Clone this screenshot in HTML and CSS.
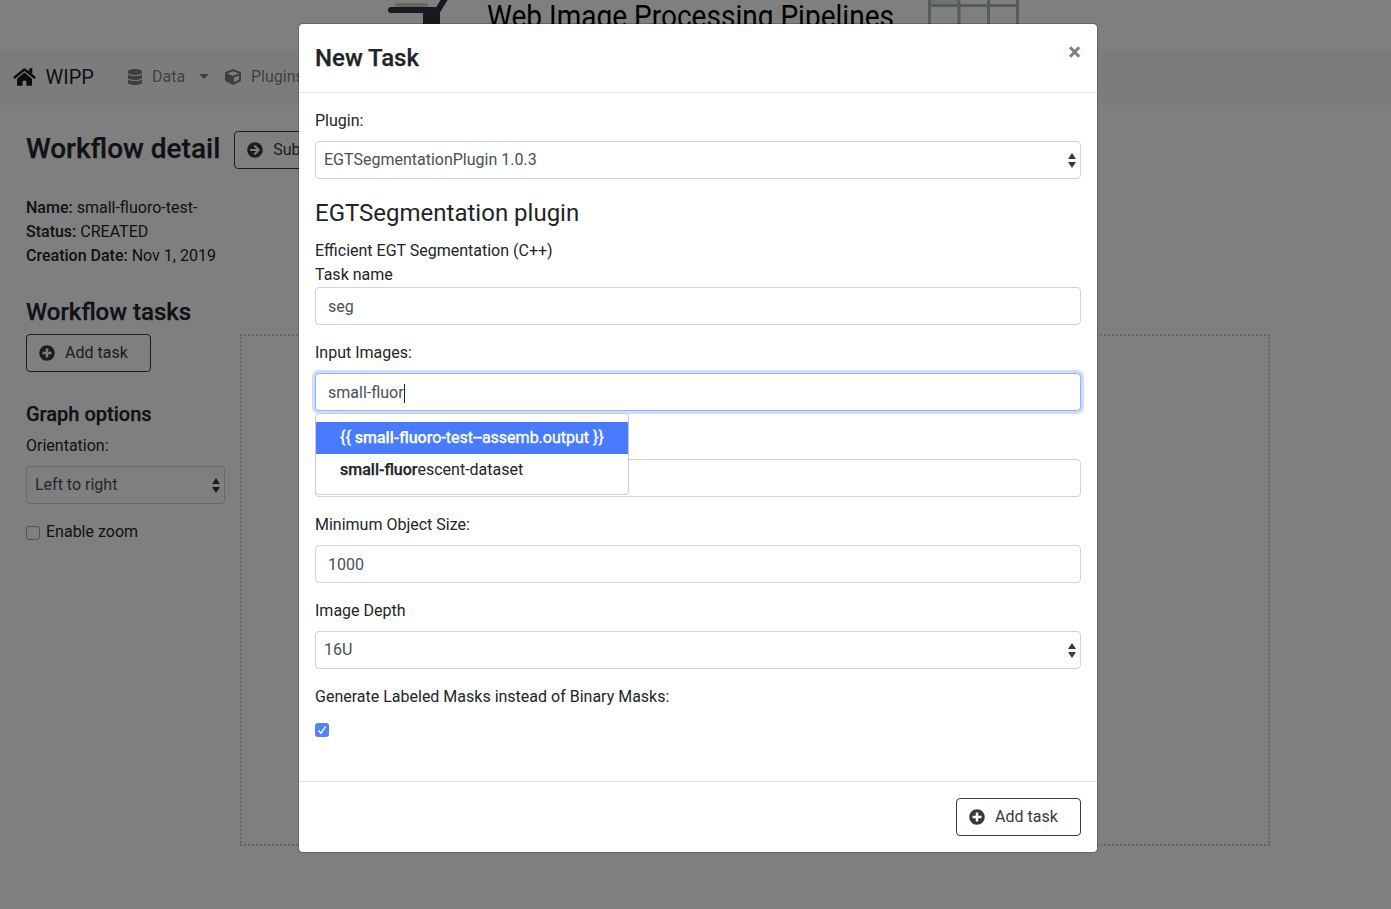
FILE: index.html
```
<!DOCTYPE html>
<html lang="en">
<head>
<meta charset="utf-8">
<title>WIPP</title>
<link rel="stylesheet" href="styles.css">
</head>
<body>
<svg class="defs" width="0" height="0">
  <symbol id="plus" viewBox="0 0 512 512"><path d="M256 8C119 8 8 119 8 256s111 248 248 248 248-111 248-248S393 8 256 8zm144 276c0 6.600-5.400 12-12 12h-92v92c0 6.600-5.400 12-12 12h-56c-6.600 0-12-5.400-12-12v-92h-92c-6.600 0-12-5.400-12-12v-56c0-6.600 5.400-12 12-12h92v-92c0-6.600 5.400-12 12-12h56c6.600 0 12 5.400 12 12v92h92c6.600 0 12 5.400 12 12v56z"/></symbol>
  <symbol id="carets" viewBox="0 0 4 5" preserveAspectRatio="none"><path d="M2 0L0 2h4zm0 5L0 3h4z"/></symbol>
</svg>

<header class="banner">
  <svg class="logo" width="660" height="50" viewBox="380 0 660 50">
    <rect x="395" y="3" width="33" height="5" rx="2" fill="#d2cec4"/>
    <path d="M391 10H438L449 -8" fill="none" stroke="#303340" stroke-width="6" stroke-linecap="round"/>
    <path d="M423 9H440V50H423z" fill="#303340"/>
    <text x="487" y="27" textLength="407" lengthAdjust="spacingAndGlyphs">Web Image Processing Pipelines</text>
    <path d="M930 0h28v5h-28z" fill="#dce8ec"/>
    <path d="M929.500 0V50M959 0V50M988.500 0V50M1017.500 0V50M928 5.500H1019" fill="none" stroke="#abb9b9" stroke-width="3"/>
  </svg>
</header>

<nav class="navbar">
  <a class="brand"><svg width="23" height="20" viewBox="0 0 576 512"><path d="M280.370 148.260L96 300.110V464a16 16 0 0 0 16 16l112.060-.29a16 16 0 0 0 15.920-16V368a16 16 0 0 1 16-16h64a16 16 0 0 1 16 16v95.640a16 16 0 0 0 16 16.050L464 480a16 16 0 0 0 16-16V300L295.670 148.260a12.190 12.190 0 0 0-15.300 0zM571.600 251.470L488 182.560V44.050a12 12 0 0 0-12-12h-56a12 12 0 0 0-12 12v72.610L318.470 43a48 48 0 0 0-61 0L4.340 251.470a12 12 0 0 0-1.600 16.900l25.500 31A12 12 0 0 0 45.150 301l235.220-193.740a12.190 12.190 0 0 1 15.300 0L530.900 301a12 12 0 0 0 16.900-1.600l25.500-31a12 12 0 0 0-1.700-16.930z"/></svg><span>WIPP</span></a>
  <a class="nav-link data"><svg width="14" height="16" viewBox="0 0 448 512"><path d="M448 73v46c0 40-100 73-224 73S0 159 0 119V73C0 33 100 0 224 0s224 33 224 73zm0 103v103c0 40-100 73-224 73S0 319 0 279V176c48 33 136 48.600 224 48.600S400 209 448 176zm0 160v103c0 40-100 73-224 73S0 479 0 439V336c48 33 136 48.600 224 48.600S400 369 448 336z"/></svg><span>Data</span><i class="caret"></i></a>
  <a class="nav-link"><svg width="16" height="16" viewBox="0 0 512 512"><path d="M239.100 6.300l-208 78c-18.700 7-31.100 25-31.100 45v225.100c0 18.200 10.300 34.800 26.500 42.900l208 104c13.500 6.800 29.400 6.800 42.900 0l208-104c16.300-8.100 26.500-24.800 26.500-42.900V129.300c0-20-12.400-37.900-31.100-44.900l-208-78C262 2.200 250 2.200 239.100 6.300zM256 68.400l192 72v1.100l-192 78-192-78v-1.100l192-72zm32 356V275.500l160-65v133.900l-160 80z"/></svg><span>Plugins</span></a>
</nav>

<main class="page">
  <div class="title-row">
    <h1>Workflow detail</h1>
    <button class="btn"><svg width="16" height="16" viewBox="0 0 512 512"><path d="M256 8c137 0 248 111 248 248S393 504 256 504 8 393 8 256 119 8 256 8zm-28.900 143.600l75.500 72.400H120c-13.300 0-24 10.700-24 24v16c0 13.300 10.700 24 24 24h182.600l-75.500 72.400c-9.700 9.300-9.900 24.800-.4 34.300l11 10.900c9.400 9.400 24.600 9.400 33.900 0L404.300 273c9.400-9.400 9.400-24.600 0-33.900L271.600 106.300c-9.400-9.400-24.600-9.400-33.900 0l-11 10.900c-9.500 9.600-9.300 25.100.4 34.400z"/></svg>Submit</button>
  </div>
  <div class="info"><b>Name:</b> small-fluoro-test-<br><b>Status:</b> CREATED<br><b>Creation Date:</b> Nov 1, 2019</div>
  <h2>Workflow tasks</h2>
  <div class="workspace">
    <aside class="side">
      <button class="btn"><svg width="16" height="16"><use href="#plus"/></svg>Add task</button>
      <h3>Graph options</h3>
      <label>Orientation:</label>
      <div class="control select"><span>Left to right</span><svg width="8" height="15"><use href="#carets"/></svg></div>
      <div class="check-row"><i class="check"></i>Enable zoom</div>
    </aside>
    <div class="graph"></div>
  </div>
</main>

<div class="backdrop">
  <section class="modal">
    <div class="modal-header"><h4>New Task</h4><span class="close">×</span></div>
    <div class="modal-body">
      <label>Plugin:</label>
      <div class="control select"><span>EGTSegmentationPlugin 1.0.3</span><svg width="8" height="15"><use href="#carets"/></svg></div>
      <h4 class="plugin-title">EGTSegmentation plugin</h4>
      <div>Efficient EGT Segmentation (C++)</div>
      <div>Task name</div>
      <div class="control">seg</div>
      <label>Input Images:</label>
      <div class="typeahead">
        <div class="control focus">small-fluor<i class="cursor"></i></div>
        <div class="menu">
          <div class="item active">{{ <b>small-fluor</b>o-test--assemb.output }}</div>
          <div class="item"><b>small-fluor</b>escent-dataset</div>
        </div>
      </div>
      <div class="control covered"></div>
      <label>Minimum Object Size:</label>
      <div class="control">1000</div>
      <label>Image Depth</label>
      <div class="control select"><span>16U</span><svg width="8" height="15"><use href="#carets"/></svg></div>
      <label>Generate Labeled Masks instead of Binary Masks:</label>
      <div class="check checked"><svg width="14" height="14" viewBox="0 0 14 14"><path d="M3.500 7.500L6 10.300L10.500 3.600"/></svg></div>
    </div>
    <div class="modal-footer"><button class="btn"><svg width="16" height="16"><use href="#plus"/></svg>Add task</button></div>
  </section>
</div>
</body>
</html>
```
FILE: styles.css
```
* { box-sizing: border-box; }
body {
  margin: 0;
  height: 909px;
  overflow: hidden;
  background: #fff;
  color: #212529;
  font: 400 16px/24px Roboto, sans-serif;
}
h1, h2, h3, h4 { margin: 0; font-weight: 500; }
h1, h2, h3, .modal-header h4 { -webkit-text-stroke: .25px currentColor; }
b { font-weight: 500; }
svg { fill: currentColor; flex: none; }
.defs { position: absolute; }
label { display: block; margin-bottom: 8px; }

.banner { height: 50px; padding-left: 380px; }
.logo { display: block; }
.logo text { font: 400 31.500px Roboto, sans-serif; fill: #000; }

.navbar {
  height: 55px;
  padding: 0 13px 2px;
  display: flex;
  align-items: center;
  background: #f8f9fa;
  color: rgba(0, 0, 0, .5);
}
.brand { display: flex; align-items: center; gap: 9.500px; width: 114px; font-size: 20px; color: rgba(0, 0, 0, .9); }
.nav-link { display: flex; align-items: center; gap: 10px; }
.nav-link.data { width: 98px; padding-left: 1px; }
.caret { border: 5px solid transparent; border-top-color: currentColor; border-bottom: 0; margin-left: 4px; }

.page { padding: 26px 26px 0; }
.title-row { display: flex; align-items: center; gap: 14px; height: 38px; }
h1 { padding-bottom: 3px; font-size: 28px; line-height: 35px; white-space: nowrap; }
.info { margin-top: 27px; }
.info + h2 { margin-top: 30px; font-size: 24px; line-height: 29px; }

.btn {
  display: flex;
  align-items: center;
  gap: 10px;
  width: 125px;
  height: 38px;
  padding: 0 12px;
  border: 1px solid #343a40;
  border-radius: 4px;
  background: transparent;
  color: #343a40;
  font: inherit;
}
.btn svg { margin-bottom: 1px; }
.workspace { display: flex; gap: 15px; margin-top: 7px; }
.side { width: 199px; }
.side h3 { margin: 30px 0 8px; font-size: 20px; line-height: 24px; }
.side .control { background: transparent; }
.graph { width: 1030px; height: 512px; border: 2px dotted #ccc; }
.check-row { display: flex; align-items: center; gap: 6px; }
.check { width: 14px; height: 14px; margin-top: 2px; border: 1px solid #aaa; border-radius: 3px; }

.control {
  display: flex;
  align-items: center;
  height: 38px;
  margin-bottom: 16px;
  padding: 2px 12px 0;
  border: 1px solid #ced4da;
  border-radius: 4px;
  background-color: #fff;
  color: #495057;
}
.select { justify-content: space-between; padding: 0 4px 0 8px; }
.select svg { fill: #343a40; }

.backdrop { position: absolute; inset: 0; background: rgba(0, 0, 0, .5); }
.modal {
  width: 800px;
  margin: 23px 0 0 298px;
  border: 1px solid rgba(0, 0, 0, .2);
  border-radius: 5px;
  background: #fff;
  background-clip: padding-box;
}
.modal-header {
  display: flex;
  justify-content: space-between;
  height: 69px;
  padding: 16px;
  border-bottom: 1px solid #dee2e6;
}
.modal-header h4 { font-size: 24px; line-height: 36px; }
.close { font-size: 24px; font-weight: 700; line-height: 24px; color: #7f7f7f; }
.modal-body { height: 688px; padding: 16px; }
.plugin-title { margin-bottom: 8px; font-size: 24px; font-weight: 400; line-height: 36px; }
.typeahead { position: relative; }
.focus { border-color: #8bb4ff; box-shadow: 0 0 0 3px #d0ddff; }
.cursor { width: 1px; height: 19px; background: #222; }
.covered { margin-top: 48px; }
.menu {
  position: absolute;
  top: 40px;
  left: 0;
  width: 314px;
  padding: 8px 0;
  border: 1px solid #ccc;
  border-radius: 4px;
  background: #fff;
}
.item { padding: 4px 24px; white-space: nowrap; }
.item b { -webkit-text-stroke: .25px currentColor; }
.item.active { background: #487bff; color: #fff; -webkit-text-stroke: .35px currentColor; }
.checked { margin-top: 14px; border: 0; background: #5383f8; }
.checked svg { display: block; }
.checked path { fill: none; stroke: #fff; stroke-width: 1.500; }
.modal-footer { display: flex; justify-content: flex-end; padding: 16px; border-top: 1px solid #dee2e6; }
```
